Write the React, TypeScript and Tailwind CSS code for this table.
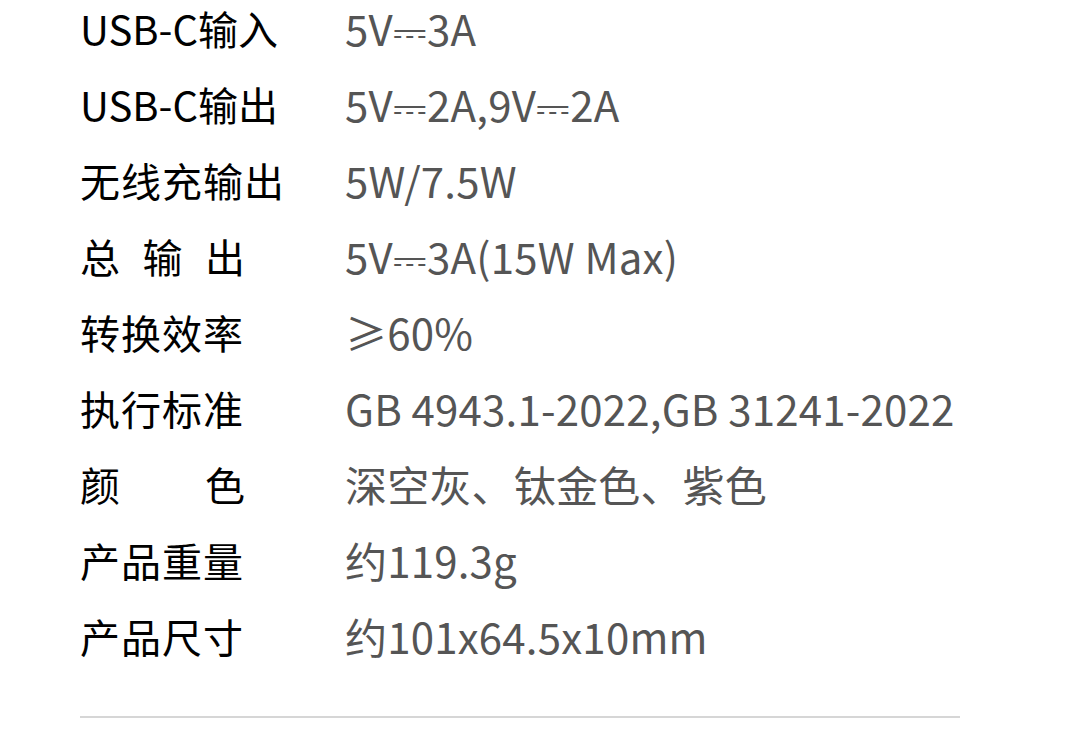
import React from "react";

type Row = { label: string[]; value: string; latin?: boolean };

const rows: Row[] = [
  { label: ["USB-C输入"], value: "5V⎓3A", latin: true },
  { label: ["USB-C输出"], value: "5V⎓2A,9V⎓2A", latin: true },
  { label: ["无线充输出"], value: "5W/7.5W" },
  { label: ["总", "输", "出"], value: "5V⎓3A(15W Max)" },
  { label: ["转换效率"], value: "≥60%" },
  { label: ["执行标准"], value: "GB 4943.1-2022,GB 31241-2022" },
  { label: ["颜", "色"], value: "深空灰、钛金色、紫色" },
  { label: ["产品重量"], value: "约119.3g" },
  { label: ["产品尺寸"], value: "约101x64.5x10mm" },
];

export default function App() {
  return (
    <div
      className="w-[1080px] h-[731px] overflow-hidden bg-white"
      style={{ fontFamily: '"Noto Sans CJK SC", sans-serif' }}
    >
      <div className="-mt-[10px] px-[80px]">
        {rows.map((r, i) => (
          <div key={i} className="flex items-center h-[76px] leading-none">
            {r.label.length > 1 ? (
              <div className="w-[165px] shrink-0 flex justify-between text-black text-[40px]">
                {r.label.map((c, j) => (
                  <span key={j}>{c}</span>
                ))}
              </div>
            ) : (
              <div
                className={
                  r.latin
                    ? "w-[165px] shrink-0 whitespace-nowrap text-black text-[40px]"
                    : "w-[165px] shrink-0 whitespace-nowrap text-black text-[40px] tracking-[1px]"
                }
              >
                {r.label[0]}
              </div>
            )}
            <div className="ml-[100px] text-[#555555] whitespace-nowrap text-[42px] tracking-[0.2px]">
              {r.value}
            </div>
          </div>
        ))}
        <div className="mt-[42px] h-[2px] w-[880px] bg-[#d6d6d6]" />
      </div>
    </div>
  );
}
